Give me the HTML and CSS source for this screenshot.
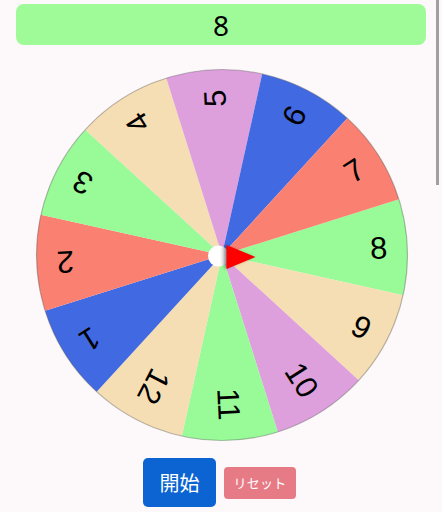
FILE: index.html
```html
<!DOCTYPE html>
<html lang="ja">
<head>
<meta charset="utf-8">
<link rel="stylesheet" href="styles.css">
</head>
<body>
<main class="page">
  <div class="result">8</div>
  <svg class="wheel" width="380" height="380" viewBox="0 0 380 380">
    <g transform="rotate(-2.5 190 190)">
      <g transform="rotate(0 190 190)"><path class="seg green" d="M190 190 L369.18 141.99 A185.5 185.5 0 0 1 369.18 238.01 Z"/><text class="num" x="355.5" y="190">8</text></g>
      <g transform="rotate(30 190 190)"><path class="seg wheat" d="M190 190 L369.18 141.99 A185.5 185.5 0 0 1 369.18 238.01 Z"/><text class="num" x="355.5" y="190">9</text></g>
      <g transform="rotate(60 190 190)"><path class="seg plum" d="M190 190 L369.18 141.99 A185.5 185.5 0 0 1 369.18 238.01 Z"/><text class="num" x="355.5" y="190">10</text></g>
      <g transform="rotate(90 190 190)"><path class="seg green" d="M190 190 L369.18 141.99 A185.5 185.5 0 0 1 369.18 238.01 Z"/><text class="num" x="355.5" y="190">11</text></g>
      <g transform="rotate(120 190 190)"><path class="seg wheat" d="M190 190 L369.18 141.99 A185.5 185.5 0 0 1 369.18 238.01 Z"/><text class="num" x="355.5" y="190">12</text></g>
      <g transform="rotate(150 190 190)"><path class="seg blue" d="M190 190 L369.18 141.99 A185.5 185.5 0 0 1 369.18 238.01 Z"/><text class="num" x="355.5" y="190">1</text></g>
      <g transform="rotate(180 190 190)"><path class="seg salmon" d="M190 190 L369.18 141.99 A185.5 185.5 0 0 1 369.18 238.01 Z"/><text class="num" x="355.5" y="190">2</text></g>
      <g transform="rotate(210 190 190)"><path class="seg green" d="M190 190 L369.18 141.99 A185.5 185.5 0 0 1 369.18 238.01 Z"/><text class="num" x="355.5" y="190">3</text></g>
      <g transform="rotate(240 190 190)"><path class="seg wheat" d="M190 190 L369.18 141.99 A185.5 185.5 0 0 1 369.18 238.01 Z"/><text class="num" x="355.5" y="190">4</text></g>
      <g transform="rotate(270 190 190)"><path class="seg plum" d="M190 190 L369.18 141.99 A185.5 185.5 0 0 1 369.18 238.01 Z"/><text class="num" x="355.5" y="190">5</text></g>
      <g transform="rotate(300 190 190)"><path class="seg blue" d="M190 190 L369.18 141.99 A185.5 185.5 0 0 1 369.18 238.01 Z"/><text class="num" x="355.5" y="190">6</text></g>
      <g transform="rotate(330 190 190)"><path class="seg salmon" d="M190 190 L369.18 141.99 A185.5 185.5 0 0 1 369.18 238.01 Z"/><text class="num" x="355.5" y="190">7</text></g>
    </g>
    <circle class="rim" cx="190" cy="190" r="185.5"/>
    <defs>
      <linearGradient id="hubg" x1="0" y1="0" x2="1" y2="0">
        <stop offset="0" stop-color="#ffffff"/>
        <stop offset="0.55" stop-color="#ffffff"/>
        <stop offset="1" stop-color="#bdbdbd"/>
      </linearGradient>
    </defs>
    <circle class="hub" cx="186.5" cy="191" r="10.5"/>
    <polygon class="pointer" points="194.5,180 194.5,204 223.5,192"/>
  </svg>
  <div class="actions">
    <button class="btn start">開始</button>
    <button class="btn reset">リセット</button>
  </div>
</main>
<div class="scrollbar"></div>
</body>
</html>
```
FILE: styles.css
```css
html, body {
  margin: 0;
  padding: 0;
  background: #fdf8fa;
  font-family: "Noto Sans", "Noto Sans CJK JP", sans-serif;
}
.page {
  display: flex;
  flex-direction: column;
  align-items: center;
  padding-top: 4px;
}
.result {
  box-sizing: border-box;
  width: 410px;
  height: 41px;
  background: #9ffa98;
  border-radius: 8px;
  display: flex;
  align-items: center;
  justify-content: center;
  font-size: 28px;
  color: #000;
}
.wheel {
  display: block;
  margin-top: 20px;
  margin-left: 1px;
  overflow: visible;
}
.seg { stroke: none; }
.green { fill: #98fb98; }
.wheat { fill: #f5deb3; }
.plum { fill: #dda0dd; }
.blue { fill: #4169e1; }
.salmon { fill: #fa8072; }
.num {
  font-family: "Liberation Sans", Arial, sans-serif;
  font-size: 31px;
  fill: #000;
  text-anchor: end;
  dominant-baseline: central;
}
.rim {
  fill: none;
  stroke: rgba(90, 90, 90, 0.4);
  stroke-width: 1.2;
}
.hub {
  fill: url(#hubg);
}
.pointer {
  fill: #ff0000;
  filter: drop-shadow(-2px 0 1.5px rgba(0, 0, 0, 0.35));
}
.actions {
  display: flex;
  align-items: center;
  gap: 8px;
  margin-top: 13px;
  margin-right: 3px;
}
.btn {
  border: none;
  color: #fff;
  font-family: "Noto Sans CJK JP", "Noto Sans", sans-serif;
  padding: 0;
  display: flex;
  align-items: center;
  justify-content: center;
}
.start {
  width: 73px;
  height: 49px;
  background: #0b64d2;
  border-radius: 5px;
  font-size: 20px;
}
.reset {
  width: 72px;
  height: 32px;
  background: #e67b86;
  border-radius: 4px;
  font-size: 13px;
  letter-spacing: 0.3px;
}
.scrollbar {
  position: fixed;
  top: 0;
  right: 3px;
  width: 3px;
  height: 185px;
  background: #a29ea2;
}
```
